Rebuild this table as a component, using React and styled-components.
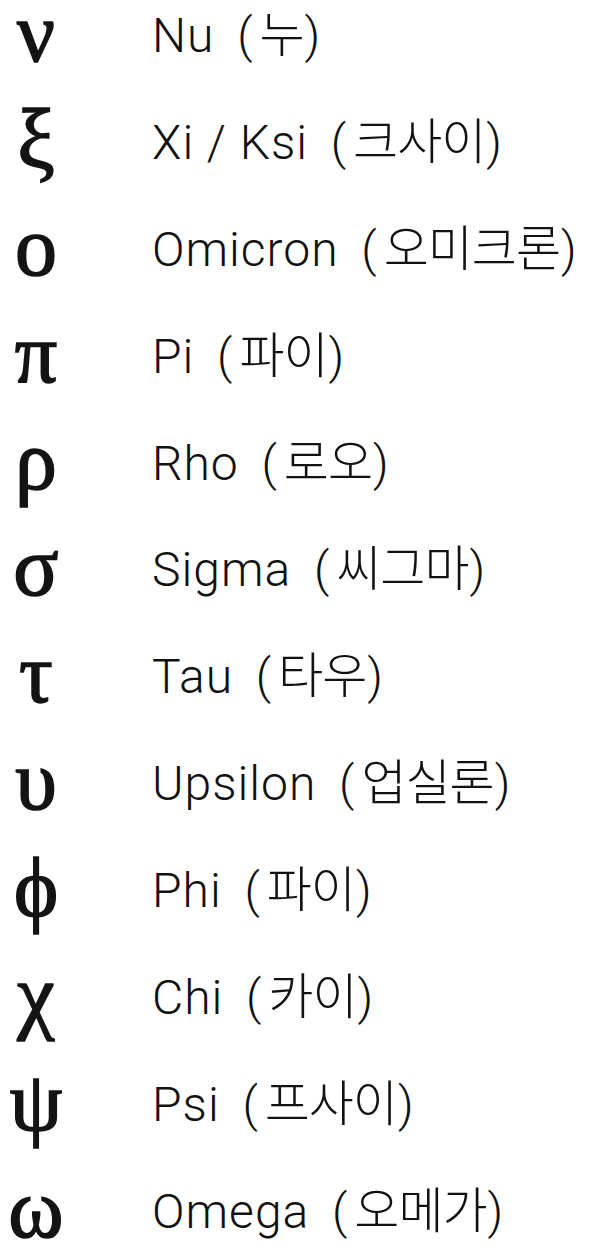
import React from 'react';
import styled, { createGlobalStyle } from 'styled-components';

const GlobalStyle = createGlobalStyle`
  html, body {
    margin: 0;
    padding: 0;
    background: #ffffff;
    height: 100%;
    overflow: hidden;
  }
`

const List = styled.div`
  display: grid;
  grid-auto-rows: 106.9px;
  width: 604px;
`

const Row = styled.div`
  display: grid;
  grid-template-columns: 152px 1fr;
  align-items: start;
`

const Glyph = styled.span`
  width: 72px;
  margin-top: -13px;
  text-align: center;
  font-family: "Liberation Serif", "DejaVu Serif", serif;
  font-size: 84px;
  line-height: 92px;
  color: #141414;
  -webkit-text-stroke: 1.6px #141414;
`

const Name = styled.span`
  padding-top: 7px;
  font-family: Roboto, "Liberation Sans", sans-serif;
  font-weight: 300;
  font-size: 48px;
  line-height: 48px;
  letter-spacing: 1px;
  color: #111;
  white-space: nowrap;
`

const Paren = styled.span`
  font-family: Roboto, "Liberation Sans", sans-serif;
  margin-left: ${(p) => (p.open ? '10px' : '1px')};
  margin-right: ${(p) => (p.open ? '6px' : '0')};
`

const Hangul = styled.span`
  font-family: "Noto Sans CJK KR", sans-serif;
  font-weight: 300;
  font-size: 49px;
  letter-spacing: -1px;
`

const letters = [
  { sym: '\u03BD', en: 'Nu', ko: '누' },
  { sym: '\u03BE', en: 'Xi / Ksi', ko: '크사이' },
  { sym: '\u03BF', en: 'Omicron', ko: '오미크론' },
  { sym: '\u03C0', en: 'Pi', ko: '파이' },
  { sym: '\u03C1', en: 'Rho', ko: '로오' },
  { sym: '\u03C3', en: 'Sigma', ko: '씨그마' },
  { sym: '\u03C4', en: 'Tau', ko: '타우' },
  { sym: '\u03C5', en: 'Upsilon', ko: '업실론' },
  { sym: '\u03D5', en: 'Phi', ko: '파이' },
  { sym: '\u03C7', en: 'Chi', ko: '카이' },
  { sym: '\u03C8', en: 'Psi', ko: '프사이' },
  { sym: '\u03C9', en: 'Omega', ko: '오메가' },
];

const App = () => (
  <>
    <GlobalStyle />
    <List>
      {letters.map((l) => (
        <Row key={l.en}>
          <Glyph>{l.sym}</Glyph>
          <Name>
            {l.en} <Paren open>(</Paren>
            <Hangul>{l.ko}</Hangul>
            <Paren>)</Paren>
          </Name>
        </Row>
      ))}
    </List>
  </>
);

export default App;
